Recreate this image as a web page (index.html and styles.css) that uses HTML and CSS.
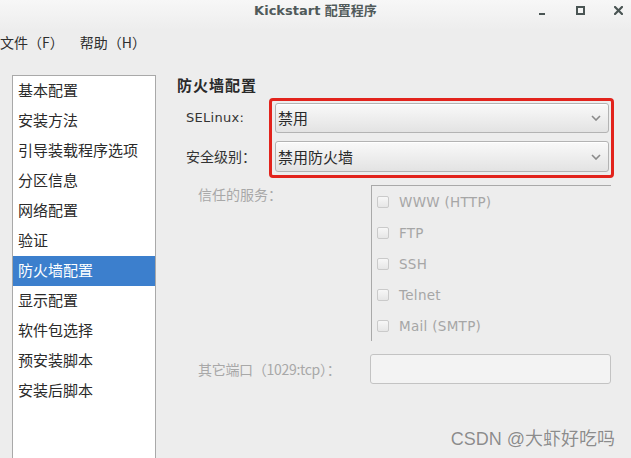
FILE: index.html
```html
<!DOCTYPE html>
<html>
<head>
<meta charset="utf-8">
<link rel="stylesheet" href="styles.css">
</head>
<body>
<div class="window">
  <div class="titlebar">
    <div></div>
    <div class="title">Kickstart 配置程序</div>
    <div class="controls">
      <span class="ctl"><span class="ico-min"></span></span>
      <span class="ctl"><span class="ico-max"></span></span>
      <span class="ctl">
        <svg width="9" height="9" viewBox="0 0 9 9"><path d="M1 1 L8 8 M8 1 L1 8" stroke="#4a5554" stroke-width="2.2" stroke-linecap="square"/></svg>
      </span>
    </div>
  </div>
  <div class="menubar">
    <span class="menu">文件（F）</span>
    <span class="menu">帮助（H）</span>
  </div>
  <div class="main">
    <ul class="sidebar">
      <li class="item">基本配置</li>
      <li class="item">安装方法</li>
      <li class="item">引导装载程序选项</li>
      <li class="item">分区信息</li>
      <li class="item">网络配置</li>
      <li class="item">验证</li>
      <li class="item selected">防火墙配置</li>
      <li class="item">显示配置</li>
      <li class="item">软件包选择</li>
      <li class="item">预安装脚本</li>
      <li class="item">安装后脚本</li>
    </ul>
    <div class="content">
      <div class="heading">防火墙配置</div>
      <div class="fw-row">
        <div class="labels">
          <div class="label latin">SELinux:</div>
          <div class="label">安全级别：</div>
        </div>
        <div class="redbox">
          <div class="combo"><span>禁用</span>
            <svg class="chev" width="10" height="6" viewBox="0 0 10 6"><path d="M1 1 L5 5 L9 1" fill="none" stroke="#8a8a8a" stroke-width="1.6"/></svg>
          </div>
          <div class="combo"><span>禁用防火墙</span>
            <svg class="chev" width="10" height="6" viewBox="0 0 10 6"><path d="M1 1 L5 5 L9 1" fill="none" stroke="#8a8a8a" stroke-width="1.6"/></svg>
          </div>
        </div>
      </div>
      <div class="svc-row">
        <div class="dim-label">信任的服务：</div>
        <div class="svc-box">
          <div class="svc"><span class="check"></span><span class="svc-name">WWW (HTTP)</span></div>
          <div class="svc"><span class="check"></span><span class="svc-name">FTP</span></div>
          <div class="svc"><span class="check"></span><span class="svc-name">SSH</span></div>
          <div class="svc"><span class="check"></span><span class="svc-name">Telnet</span></div>
          <div class="svc"><span class="check"></span><span class="svc-name">Mail (SMTP)</span></div>
        </div>
      </div>
      <div class="port-row">
        <div class="dim-label port-label">其它端口（1029:tcp）：</div>
        <div class="entry"></div>
      </div>
    </div>
  </div>
  <div class="watermark">CSDN @大虾好吃吗</div>
</div>
</body>
</html>
```
FILE: styles.css
```css
html, body {
  margin: 0;
  padding: 0;
}
body {
  width: 631px;
  height: 458px;
  overflow: hidden;
  background: #ededed;
  font-family: "DejaVu Sans", "Noto Sans CJK SC", sans-serif;
  color: #2e2e2e;
}
.window {
  position: relative;
  width: 631px;
  height: 458px;
  background: linear-gradient(to bottom, #f7f7f7 0px, #ededed 30px, #ededed 100%);
}
.titlebar {
  height: 21px;
  display: grid;
  grid-template-columns: 1fr auto 1fr;
  align-items: center;
}
.title {
  font-size: 13px;
  font-weight: bold;
  color: #505a5a;
  line-height: 20px;
  font-family: "DejaVu Sans", "Noto Sans CJK SC", sans-serif;
}
.controls {
  display: flex;
  justify-content: flex-end;
  gap: 22px;
  padding-right: 5px;
  align-items: center;
}
.ctl {
  width: 16px;
  height: 16px;
  display: flex;
  align-items: center;
  justify-content: center;
}
.ico-min {
  width: 6px;
  height: 2px;
  background: #4a5554;
  margin-top: 6px;
}
.ico-max {
  width: 5px;
  height: 5px;
  border: 2px solid #4a5554;
}
.menubar {
  margin-top: 6px;
  height: 30px;
  display: flex;
  gap: 16px;
  align-items: center;
  font-family: "Noto Sans CJK SC", sans-serif;
  font-size: 14px;
  color: #2e2e2e;
}
.menu {
  line-height: 30px;
}
.main {
  margin-top: 18px;
  display: flex;
  padding-left: 12px;
}
.sidebar {
  list-style: none;
  margin: 0;
  padding: 0;
  width: 142px;
  height: 400px;
  border: 1px solid #a9a9a9;
  background: #ffffff;
  font-family: "Noto Sans CJK SC", sans-serif;
  font-size: 15px;
}
.item {
  height: 30px;
  line-height: 27px;
  padding-left: 5px;
  color: #2a2a2a;
}
.item.selected {
  background: #3c7fcd;
  color: #ffffff;
}
.content {
  flex: 1;
  padding-left: 21px;
}
.heading {
  font-family: "Noto Sans CJK SC", sans-serif;
  font-weight: bold;
  font-size: 15px;
  letter-spacing: 1px;
  line-height: 19px;
  height: 20px;
  color: #2a2a2a;
}
.fw-row {
  margin-top: 3px;
  margin-left: 9px;
  display: flex;
}
.labels {
  width: 83px;
  padding-top: 5px;
  display: flex;
  flex-direction: column;
  gap: 8px;
}
.label {
  height: 30px;
  line-height: 30px;
  font-family: "Noto Sans CJK SC", sans-serif;
  font-size: 14px;
  color: #333;
}
.label.latin {
  font-family: "DejaVu Sans", sans-serif;
  font-size: 13px;
  letter-spacing: 0.3px;
}
.redbox {
  border: 3px solid #e2231c;
  border-radius: 4px;
  padding: 2px 2px 3px 3px;
  display: flex;
  flex-direction: column;
  gap: 8px;
}
.combo {
  width: 334px;
  height: 30px;
  box-sizing: border-box;
  border: 1px solid #b3b3b3;
  border-radius: 3px;
  background: linear-gradient(to bottom, #f9f9f9, #e3e3e3);
  box-shadow: inset 0 1px 0 #ffffff;
  display: flex;
  align-items: center;
  justify-content: space-between;
  padding-left: 2px;
  padding-right: 7px;
  font-family: "Noto Sans CJK SC", sans-serif;
  font-size: 15px;
  color: #2a2a2a;
}
.combo span {
  line-height: 28px;
}
.combo + .combo {
  height: 31px;
}
.chev {
  display: block;
}
.svc-row {
  margin-top: 7px;
  display: flex;
}
.dim-label {
  width: 194px;
  padding-left: 21px;
  box-sizing: border-box;
  font-family: "Noto Sans CJK SC", sans-serif;
  font-size: 14px;
  line-height: 18px;
  color: #a8a8a8;
}
.svc-box {
  width: 240px;
  height: 156px;
  border-top: 1px solid #a9a9a9;
  border-left: 1px solid #a9a9a9;
  box-sizing: border-box;
  padding-left: 5px;
}
.svc {
  height: 31px;
  display: flex;
  align-items: center;
  gap: 10px;
}
.check {
  width: 10px;
  height: 10px;
  border: 1px solid #cacaca;
  border-radius: 2px;
  background: linear-gradient(to bottom, #f7f7f7, #e6e6e6);
}
.svc-name {
  font-family: "DejaVu Sans", sans-serif;
  font-size: 13.5px;
  color: #a6a6a6;
  letter-spacing: 0.3px;
}
.port-row {
  margin-top: 13px;
  display: flex;
  align-items: center;
}
.port-label {
  width: 193px;
  letter-spacing: -0.3px;
}
.entry {
  width: 241px;
  height: 30px;
  box-sizing: border-box;
  border: 1px solid #c3c3c3;
  border-radius: 3px;
  background: #f3f3f3;
}
.watermark {
  position: absolute;
  right: 16px;
  top: 428px;
  font-family: "Liberation Sans", "Noto Sans CJK SC", sans-serif;
  font-size: 18px;
  line-height: 22px;
  color: #8c8c8c;
  text-shadow: 0 0 1px #ffffff;
}
```
